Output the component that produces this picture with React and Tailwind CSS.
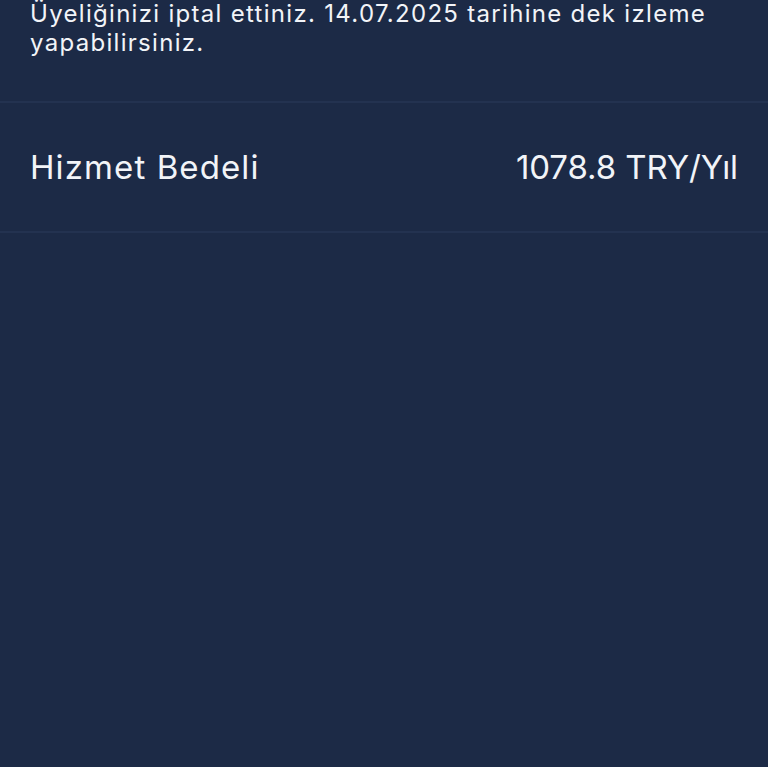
export default function App() {
  return (
    <div className="min-h-[768px] w-full bg-[#1c2a46] text-[#f2f4f8]" style={{ fontFamily: "Inter, 'Noto Sans', sans-serif" }}>
      <div className="px-[30px] pb-[44px] text-[24px] leading-[29px] tracking-[1.3px]">
        <p className="-mt-[1px]">Üyeliğinizi iptal ettiniz. 14.07.2025 tarihine dek izleme yapabilirsiniz.</p>
      </div>
      <div className="border-t-2 border-b-2 border-[#233250] flex items-center justify-between px-[30px] h-[132px] text-[33px] pt-[2px]">
        <span className="tracking-[1.1px]">Hizmet Bedeli</span>
        <span className="tracking-[-0.1px]">1078.8 TRY/Yıl</span>
      </div>
    </div>
  );
}
